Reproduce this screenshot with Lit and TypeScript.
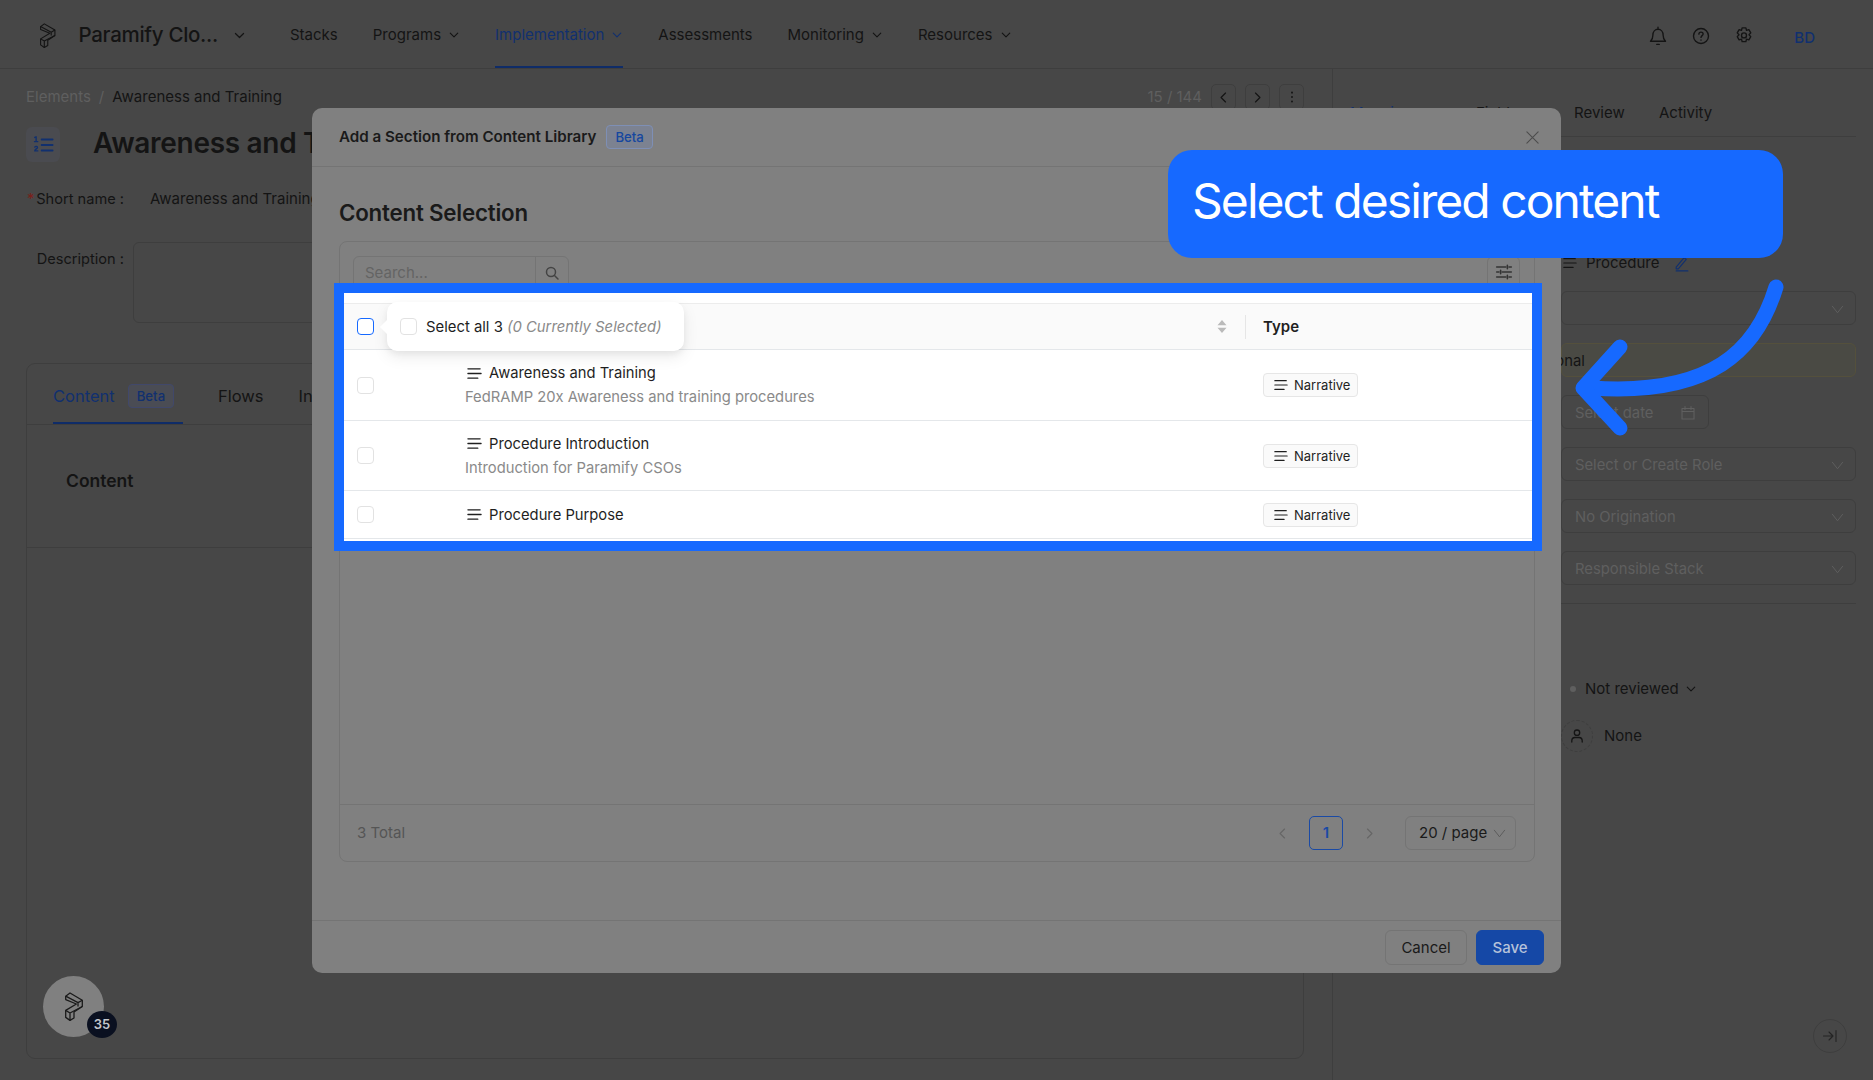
import { LitElement, css, html, svg } from "lit";
import { customElement } from "lit/decorators.js";

const icon = (size: number, body: unknown, sw = 1.4, box = 16) => html`<svg
  width=${size}
  height=${size}
  viewBox="0 0 ${box} ${box}"
  fill="none"
  stroke="currentColor"
  stroke-width=${sw}
  stroke-linecap="round"
  stroke-linejoin="round"
>${body}</svg>`;

const chevDown = (size = 12) => icon(size, svg`<path d="M3 5.500 8 10.500 13 5.500" />`, 1.5);
const chevThin = (size = 15) => icon(size, svg`<path d="M2.500 4.500 8 11.500l5.500-7" />`, 1);
const chevLeft = (size = 14) => icon(size, svg`<path d="M10.500 2.500 5 8l5.500 5.500" />`, 1.5);
const chevRight = (size = 14) => icon(size, svg`<path d="M5.500 2.500 11 8l-5.500 5.500" />`, 1.500);
const lines = (size = 15) => icon(size, svg`<path d="M1 3h13M1 8h14M1 13h10.500" />`, 1.4);

const logo = (h: number) => html`<svg
  height=${h}
  viewBox="0 0 18 29"
  fill="none"
  stroke="currentColor"
  stroke-width="1.3"
  stroke-linejoin="round"
>
  <path d="M.7 4.200 5 1l12.300 7.200v6.300L9 20v6l-4 2.400-4.300-3v-7L11.400 12 .7 7.600z" />
  <path d="M.7 4.200 13 10.600v3.800M13 10.600l4.300-2.400M.7 18.400 5 21v7.400M5 21l12.300-6.500" />
</svg>`;

const fields = ["Select or Create Role", "No Origination", "Responsible Stack"];

const rows = [
  { title: "Awareness and Training", sub: "FedRAMP 20x Awareness and training procedures", h: 71 },
  { title: "Procedure Introduction", sub: "Introduction for Paramify CSOs", h: 70 },
  { title: "Procedure Purpose", sub: "", h: 48 },
];

@customElement("app-root")
export class AppRoot extends LitElement {
  private renderNav() {
    return html`
      <header class="top">
        <div class="brand">
          ${logo(25)}
          <span class="brand-name">Paramify Clo...</span>
          ${chevDown(13)}
        </div>
        <nav class="nav">
          <span class="nav-item">Stacks</span>
          <span class="nav-item">Programs ${chevDown()}</span>
          <span class="nav-item active">Implementation ${chevDown()}</span>
          <span class="nav-item">Assessments</span>
          <span class="nav-item">Monitoring ${chevDown()}</span>
          <span class="nav-item">Resources ${chevDown()}</span>
        </nav>
        <div class="top-icons">
          ${icon(20, svg`<path d="M2 12.200c1.300-1.200 1.900-2.300 1.900-4.900C3.900 4.500 5.700 2.600 8 2.600s4.100 1.900 4.100 4.700c0 2.600.6 3.700 1.900 4.900zM8 1v1.600M7 14.700h2" />`, 1.1)}
          ${icon(20, svg`<circle cx="8" cy="8" r="6" /><path d="M6.300 6.500C6.300 5.500 7 4.900 8 4.900s1.700.6 1.700 1.500c0 1.200-1.700 1.400-1.700 2.700" /><path d="M8 11.100v.2" />`, 1.1)}
          ${icon(20, svg`<path d="M6.500 1.500h3l.5 2 1.900-.6 1.500 2.600-1.400 1.500 1.400 1.500-1.500 2.600-1.900-.6-.5 2h-3l-.5-2-1.900.6L2.600 8.500 4 7 2.600 5.500l1.500-2.600 1.900.6z" /><circle cx="8" cy="7.500" r="2" />`, 1.1)}
          <span class="avatar">BD</span>
        </div>
      </header>
    `;
  }

  private renderMain() {
    return html`
      <main class="main">
        <div class="crumbs">
          <span><span class="muted">Elements</span><span class="muted sep">/</span>Awareness and Training</span>
          <div class="pager">
            <span class="muted">15 / 144</span>
            <span class="pager-btn">${chevLeft(13)}</span>
            <span class="pager-btn">${chevRight(13)}</span>
            <span class="pager-btn">
              ${icon(14, svg`<path d="M8 2.800v.2M8 7.900v.2M8 13v.2" />`, 2.2)}
            </span>
          </div>
        </div>
        <div class="title-row">
          <span class="title-icon">
            ${icon(22, svg`<path d="M7 4h8M7 8h8M7 12h8" /><path d="M2 2.500 3 2v3.500M1.800 5.500h2.400M2 9.500c.6-.8 2-.6 2 .3 0 .9-2 1.300-2 2.500h2.200" stroke-width="1" />`, 1.3)}
          </span>
          <h1 class="title">Awareness and T</h1>
        </div>
        <div class="short">
          <span class="label"><i>*</i>Short name :</span>
          <span>Awareness and Training</span>
        </div>
        <div class="desc">
          <span class="label">Description :</span>
          <div class="desc-box"></div>
        </div>
        <section class="card">
          <div class="card-tabs">
            <span class="card-tab active">Content <span class="beta dark">Beta</span></span>
            <span class="card-tab">Flows</span>
            <span class="card-tab">In</span>
          </div>
          <h2 class="card-title">Content</h2>
          <div class="card-rule"></div>
        </section>
      </main>
    `;
  }

  private renderAside() {
    return html`
      <aside class="aside">
        <div class="aside-tabs">
          <span class="blue">Mapping</span><span>Fields</span><span>Review</span><span>Activity</span>
        </div>
        <div class="proc">
          ${lines(14)}<span>Procedure</span>
          <span class="pencil">${icon(17, svg`<path d="M3 11.500 10.500 2.500l2 1.700L5 13H3zM3 15h11" />`, 1.1)}</span>
        </div>
        <div class="props">
          <div class="prop first">${chevThin()}</div>
          <div class="prop warn"><span class="overflow">Operational</span></div>
          <div class="prop date">
            <span>Select date</span>
            ${icon(16, svg`<path d="M2 3.500h12V14H2zM2 6.500h12M5 1.500v3M11 1.500v3" />`, 1.1)}
          </div>
          ${fields.map((f) => html`<div class="prop"><span>${f}</span>${chevThin()}</div>`)}
        </div>
        <div class="aside-rule"></div>
        <div class="status">
          <i class="dot"></i>Not reviewed ${chevDown(12)}
        </div>
        <div class="owner">
          <span class="person">
            ${icon(16, svg`<circle cx="8" cy="4.700" r="2.700" /><path d="M2.800 14v-1.200c0-2 1.500-3.300 3.200-3.300h4c1.700 0 3.200 1.300 3.200 3.300V14" />`, 1.3)}
          </span>
          None
        </div>
      </aside>
    `;
  }

  private renderTable() {
    return html`
      <div class="table">
        <div class="thead">
          <div class="cell-check"><span class="check focus"></span></div>
          <div class="sort">
            <svg width="10" height="15" viewBox="0 0 10 15" fill="currentColor">
              <path d="M5 1 9.500 6.300H.5zM5 14 .5 8.700h9z" />
            </svg>
          </div>
          <div class="type-head">Type</div>
        </div>
        ${rows.map(
          (r) => html`
            <div class="tr" style="height:${r.h}px">
              <div class="cell-check"><span class="check"></span></div>
              <div class="name">
                <div class="name-line">${lines()}<span>${r.title}</span></div>
                ${r.sub ? html`<div class="name-sub">${r.sub}</div>` : ""}
              </div>
              <div class="type-cell">
                <span class="tag">${lines(14)}Narrative</span>
              </div>
            </div>
          `,
        )}
      </div>
    `;
  }

  private renderModal() {
    return html`
      <div class="modal">
        <div class="modal-head">
          <span class="modal-title">Add a Section from Content Library</span>
          <span class="beta">Beta</span>
          <span class="close">${icon(15, svg`<path d="M2 2l12 12M14 2 2 14" />`, 1.2)}</span>
        </div>
        <div class="modal-body">
          <h2 class="section">Content Selection</h2>
          <div class="panel">
            <div class="toolbar">
              <div class="search">
                <span class="search-text">Search...</span>
                <span class="search-btn">
                  ${icon(16, svg`<circle cx="7" cy="7" r="4.500" /><path d="M10.500 10.500 14 14" />`, 1.5)}
                </span>
              </div>
              <span class="filter">
                ${icon(18, svg`<path d="M1.500 3.500h8M12.500 3.500h2M11 2v3M1.500 8h2M6.500 8h8M5 6.500v3M1.500 12.500h8M12.500 12.500h2M11 11v3" />`, 1.4)}
              </span>
            </div>
            ${this.renderTable()}
            <div class="spacer"></div>
            <div class="foot">
              <span class="total">3 Total</span>
              <div class="pages">
                <span class="page-arrow">${chevLeft(13)}</span>
                <span class="page-now">1</span>
                <span class="page-arrow next">${chevRight(13)}</span>
                <span class="page-size">20 / page <span class="size-chev">${chevThin(15)}</span></span>
              </div>
            </div>
          </div>
        </div>
        <div class="modal-foot">
          <span class="btn">Cancel</span>
          <span class="btn primary">Save</span>
        </div>
      </div>
    `;
  }

  render() {
    return html`
      <div class="page">
        ${this.renderNav()}
        <div class="content">${this.renderMain()}${this.renderAside()}</div>
      </div>
      ${this.renderModal()}
      <div class="bubble">${logo(29)}<span class="bubble-count">35</span></div>
      <span class="collapse">
        ${icon(16, svg`<path d="M1.500 8h9M7 4l4 4-4 4M14 2.500v11" />`, 1.1)}
      </span>

      <div class="frame"></div>
      <div class="tip">
        <span class="check"></span>
        <span>Select all 3 <em>(0 Currently Selected)</em></span>
      </div>
      <div class="callout">Select desired content</div>
      <svg class="pointer" width="240" height="180" viewBox="1570 270 240 180" fill="none" stroke="#1669ff" stroke-width="15" stroke-linecap="round" stroke-linejoin="round">
        <path d="M1776 287C1757 350 1712 396 1592 388" />
        <path d="M1620 347 1583 388 1620 428" />
      </svg>
    `;
  }

  static styles = css`
    :host {
      display: block;
      position: relative;
      width: 1873px;
      height: 1080px;
      overflow: hidden;
      background: #474747;
      color: #141414;
      font-family: Inter, "Liberation Sans", sans-serif;
      font-size: 15px;
      line-height: 22px;
    }
    h1,
    h2 {
      margin: 0;
    }
    svg {
      flex: none;
      display: block;
    }
    .muted {
      color: #5f5f5f;
    }
    .blue {
      color: #11306f;
    }
    .page {
      height: 1080px;
      display: flex;
      flex-direction: column;
    }

    /* top bar */
    .top {
      height: 69px;
      flex: none;
      box-sizing: border-box;
      display: flex;
      align-items: center;
      border-bottom: 1px solid #3e3e3e;
      padding: 0 0 0 40px;
    }
    .brand {
      display: flex;
      align-items: center;
      width: 250px;
      padding-top: 2px;
    }
    .brand-name {
      margin: 0 15px 0 23px;
      font-size: 20.500px;
      font-weight: 500;
      letter-spacing: -0.3px;
    }
    .nav {
      display: flex;
      gap: 35px;
      align-self: stretch;
    }
    .nav-item {
      display: flex;
      align-items: center;
      gap: 7px;
      padding-top: 2px;
    }
    .nav-item.active {
      color: #11306f;
      box-shadow: inset 0 -2px 0 #0f2c68;
    }
    .top-icons {
      margin-left: auto;
      display: flex;
      align-items: center;
      gap: 23px;
      padding: 4px 58px 0 0;
    }
    .avatar {
      margin: 4px 0 0 17px;
      color: #11306f;
      font-weight: 500;
    }

    /* page behind */
    .content {
      flex: 1;
      display: flex;
      min-height: 0;
    }
    .main {
      width: 1333px;
      flex: none;
      box-sizing: border-box;
      border-right: 1px solid #3e3e3e;
      padding: 17px 28px 21px 26px;
      display: flex;
      flex-direction: column;
    }
    .crumbs {
      display: flex;
      justify-content: space-between;
      height: 22px;
    }
    .sep {
      margin: 0 8px;
    }
    .pager {
      display: flex;
      gap: 9px;
    }
    .pager-btn {
      width: 25px;
      height: 26px;
      margin-top: -2px;
      border: 1px solid #3e3e3e;
      border-radius: 5px;
      box-sizing: border-box;
      display: grid;
      place-items: center;
    }
    .title-row {
      margin-top: 19px;
      display: flex;
      align-items: center;
      gap: 33px;
      height: 35px;
    }
    .title-icon {
      width: 34px;
      height: 35px;
      flex: none;
      border-radius: 6px;
      background: #4a4b50;
      color: #11306f;
      display: grid;
      place-items: center;
    }
    .title {
      font-size: 28px;
      line-height: 36px;
      margin-bottom: 4px;
      font-weight: 600;
      white-space: nowrap;
      letter-spacing: -0.3px;
    }
    .short {
      margin-top: 26px;
      display: flex;
      gap: 26px;
    }
    .label {
      width: 98px;
      flex: none;
      text-align: right;
      white-space: nowrap;
      font-size: 14.600px;
    }
    .label i {
      color: #7a1f1a;
      font-style: normal;
      margin-right: 2px;
    }
    .desc {
      margin-top: 32px;
      display: flex;
      gap: 9px;
    }
    .desc .label {
      margin-top: 6px;
    }
    .desc-box {
      flex: 1;
      height: 81px;
      border: 1px solid #3e3e3e;
      border-radius: 6px;
      box-sizing: border-box;
    }
    .card {
      flex: 1;
      margin-top: 40px;
      border: 1px solid #3e3e3e;
      border-radius: 9px;
    }
    .card-tabs {
      height: 61px;
      box-sizing: border-box;
      border-bottom: 1px solid #3e3e3e;
      padding-left: 26px;
      display: flex;
      gap: 35px;
      font-size: 16.500px;
    }
    .card-tab {
      display: flex;
      align-items: center;
      gap: 13px;
      padding-top: 3px;
    }
    .card-tab.active {
      color: #11306f;
      width: 130px;
      box-sizing: border-box;
      box-shadow: inset 0 -2px 0 #0f2c68;
    }
    .card-title {
      margin: 45px 0 0 39px;
      font-size: 17.500px;
      font-weight: 600;
    }
    .card-rule {
      margin-top: 55px;
      border-top: 1px solid #3e3e3e;
    }
    .beta {
      font-size: 13.200px;
      font-weight: 500;
      line-height: 22px;
      height: 24px;
      box-sizing: border-box;
      padding: 0 8px;
      border: 1px solid #7e8fb5;
      border-radius: 4px;
      background: #7c8291;
      color: #16479f;
    }
    .beta.dark {
      border-color: #41486a;
      background: #4a4c54;
      color: #11306f;
    }

    /* side panel */
    .aside {
      flex: 1;
      box-sizing: border-box;
      padding: 33px 17px 0 17px;
    }
    .aside-tabs {
      display: grid;
      grid-template-columns: 126px 98px 85px auto;
      height: 35px;
      border-bottom: 1px solid #3e3e3e;
      box-sizing: border-box;
    }
    .proc {
      margin: 115px 0 0 213px;
      display: flex;
      align-items: center;
      gap: 9px;
      height: 22px;
    }
    .pencil {
      margin-left: 5px;
      color: #11306f;
    }
    .props {
      margin: 17px 0 0 211px;
      display: flex;
      flex-direction: column;
      gap: 18px;
      font-size: 14.800px;
    }
    .prop {
      height: 34px;
      box-sizing: border-box;
      border: 1px solid #3e3e3e;
      border-radius: 6px;
      padding: 2px 10px 0 13px;
      display: flex;
      align-items: center;
      justify-content: space-between;
      color: #5f5f5f;
    }
    .prop.first {
      justify-content: flex-end;
    }
    .prop.warn {
      background: #4a4a44;
      border-color: #54503c;
      padding-left: 0;
      justify-content: flex-start;
      color: #141414;
    }
    .overflow {
      margin-left: -58px;
      white-space: nowrap;
    }
    .prop.date {
      width: 148px;
      padding-right: 12px;
    }
    .aside-rule {
      margin: 18px 0 0 211px;
      border-top: 1px solid #3e3e3e;
    }
    .status {
      margin: 74px 0 0 220px;
      height: 22px;
      display: flex;
      align-items: center;
      gap: 6px;
    }
    .dot {
      width: 6px;
      height: 6px;
      margin-right: 3px;
      border-radius: 50%;
      background: #5f5f5f;
    }
    .owner {
      margin: 20px 0 0 211px;
      display: flex;
      align-items: center;
      gap: 11px;
    }
    .person {
      width: 32px;
      height: 32px;
      box-sizing: border-box;
      border: 1px dashed #3e3e3e;
      border-radius: 50%;
      display: grid;
      place-items: center;
    }

    /* modal */
    .modal {
      position: absolute;
      left: 312px;
      top: 108px;
      width: 1249px;
      height: 865px;
      display: flex;
      flex-direction: column;
      background: #808080;
      border-radius: 10px;
      color: #1a1a1a;
    }
    .modal-head {
      height: 59px;
      flex: none;
      box-sizing: border-box;
      padding: 0 21px 0 27px;
      border-bottom: 1px solid #747474;
      display: flex;
      align-items: center;
      gap: 10px;
    }
    .modal-title {
      font-weight: 600;
      font-size: 15.150px;
    }
    .close {
      margin-left: auto;
      color: #4d4d4d;
    }
    .modal-body {
      flex: 1;
      min-height: 0;
      padding: 31px 26px 58px 27px;
      display: flex;
      flex-direction: column;
    }
    .section {
      font-size: 22.300px;
      line-height: 30px;
      font-weight: 600;
      letter-spacing: -0.2px;
      margin-bottom: 13px;
    }
    .panel {
      flex: 1;
      min-height: 0;
      border: 1px solid #747474;
      border-radius: 8px;
      display: flex;
      flex-direction: column;
    }
    .toolbar {
      height: 51px;
      flex: none;
      box-sizing: border-box;
      padding: 14px 14px 0 13px;
      display: flex;
      justify-content: space-between;
    }
    .search {
      width: 216px;
      height: 36px;
      box-sizing: border-box;
      border: 1px solid #747474;
      border-radius: 6px;
      display: flex;
      align-items: center;
      color: #646464;
    }
    .search-text {
      flex: 1;
      padding: 0 0 3px 11px;
    }
    .search-btn {
      width: 33px;
      height: 100%;
      box-sizing: border-box;
      padding-bottom: 3px;
      border-left: 1px solid #747474;
      display: grid;
      place-items: center;
      color: #444;
    }
    .filter {
      width: 33px;
      height: 36px;
      box-sizing: border-box;
      padding-bottom: 5px;
      border: 1px solid #747474;
      border-radius: 6px;
      display: grid;
      place-items: center;
      color: #333;
    }

    /* the lit-up table */
    .table {
      flex: none;
      height: 248px;
      box-sizing: border-box;
      padding-top: 10px;
      background: #fff;
      color: #1f1f1f;
      font-size: 14.750px;
    }
    .thead,
    .tr {
      display: grid;
      grid-template-columns: 125px 1fr 289px;
      align-items: center;
      box-sizing: border-box;
    }
    .thead {
      height: 47px;
      background: #fafafa;
      border-top: 1px solid #ececec;
      border-bottom: 1px solid #e4e7ea;
    }
    .tr {
      border-bottom: 1px solid #e4e7ea;
    }
    .cell-check {
      padding-left: 17px;
      display: flex;
    }
    .check {
      width: 17px;
      height: 17px;
      flex: none;
      box-sizing: border-box;
      background: #fff;
      border: 1px solid #e2e2e2;
      border-radius: 4px;
    }
    .check.focus {
      border-color: #1669ff;
    }
    .sort {
      justify-self: end;
      padding-right: 18px;
      color: #bababa;
    }
    .type-head {
      height: 24px;
      border-left: 1px solid #e6e6e6;
      padding-left: 17px;
      font-size: 15px;
      font-weight: 600;
      line-height: 24px;
    }
    .name-line {
      display: flex;
      align-items: center;
      gap: 7px;
      padding-left: 2px;
    }
    .name-sub {
      margin-top: 2px;
      color: #8a8a8a;
    }
    .type-cell {
      padding-left: 18px;
    }
    .tag {
      width: 95px;
      height: 24px;
      box-sizing: border-box;
      border: 1px solid #e6e6e6;
      border-radius: 4px;
      background: #fafafa;
      display: flex;
      align-items: center;
      gap: 6px;
      padding-left: 10px;
      font-size: 13px;
    }
    .spacer {
      flex: 1;
    }
    .foot {
      height: 57px;
      flex: none;
      box-sizing: border-box;
      border-top: 1px solid #747474;
      padding: 0 18px 0 17px;
      display: flex;
      align-items: center;
      justify-content: space-between;
    }
    .total {
      color: #555;
    }
    .pages {
      display: flex;
      align-items: center;
    }
    .page-arrow {
      color: #666;
      margin: 0 20px;
    }
    .page-arrow.next {
      margin-right: 29px;
    }
    .page-now {
      width: 34px;
      height: 34px;
      box-sizing: border-box;
      border: 1px solid #1a4aa5;
      border-radius: 5px;
      display: grid;
      place-items: center;
      color: #1a4aa5;
      font-weight: 600;
    }
    .page-size {
      width: 111px;
      height: 34px;
      box-sizing: border-box;
      border: 1px solid #747474;
      border-radius: 6px;
      padding: 0 8px 0 13px;
      display: flex;
      align-items: center;
      justify-content: space-between;
    }
    .size-chev {
      color: #5a5a5a;
    }
    .modal-foot {
      height: 53px;
      flex: none;
      box-sizing: border-box;
      border-top: 1px solid #747474;
      padding: 9px 17px 0 0;
      display: flex;
      justify-content: flex-end;
      gap: 9px;
    }
    .btn {
      height: 35px;
      width: 82px;
      box-sizing: border-box;
      border: 1px solid #747474;
      border-radius: 6px;
      display: grid;
      place-items: center;
    }
    .btn.primary {
      width: 68px;
      background: #1548a6;
      border-color: #1548a6;
      color: #b5c2da;
      font-weight: 500;
    }

    /* floating bits */
    .bubble {
      position: absolute;
      left: 43px;
      top: 976px;
      width: 61px;
      height: 61px;
      border-radius: 50%;
      background: #808080;
      color: #1a1a1a;
      display: grid;
      place-items: center;
    }
    .bubble-count {
      position: absolute;
      left: 44px;
      top: 35px;
      width: 30px;
      height: 27px;
      border-radius: 50%;
      background: #0a1020;
      color: #c4c7cd;
      font-size: 13px;
      font-weight: 600;
      line-height: 27px;
      text-align: center;
    }
    .collapse {
      position: absolute;
      left: 1813px;
      top: 1019px;
      width: 34px;
      height: 34px;
      box-sizing: border-box;
      border: 1px solid #3e3e3e;
      border-radius: 50%;
      display: grid;
      place-items: center;
      color: #242424;
    }
    .frame {
      position: absolute;
      left: 334px;
      top: 283px;
      width: 1208px;
      height: 268px;
      box-sizing: border-box;
      border: 10px solid #1669ff;
    }
    .tip {
      position: absolute;
      left: 387px;
      top: 302px;
      width: 297px;
      height: 49px;
      box-sizing: border-box;
      padding-left: 13px;
      display: flex;
      align-items: center;
      gap: 9px;
      background: #fff;
      border-radius: 10px;
      box-shadow: 0 6px 16px rgba(0, 0, 0, 0.08), 0 3px 6px rgba(0, 0, 0, 0.05);
      color: #1f1f1f;
      font-size: 14.850px;
    }
    .tip::before {
      content: "";
      position: absolute;
      left: -5px;
      top: 20px;
      width: 10px;
      height: 10px;
      background: #fff;
      transform: rotate(45deg);
    }
    .tip em {
      color: #8a8a8a;
    }
    .callout {
      position: absolute;
      left: 1168px;
      top: 150px;
      width: 615px;
      height: 108px;
      box-sizing: border-box;
      padding: 0 0 6px 24px;
      display: flex;
      align-items: center;
      background: #1669ff;
      border-radius: 24px;
      color: #fff;
      font-size: 48px;
      letter-spacing: -1.950px;
    }
    .pointer {
      position: absolute;
      left: 1570px;
      top: 270px;
    }
  `;
}

declare global {
  interface HTMLElementTagNameMap {
    "app-root": AppRoot;
  }
}
